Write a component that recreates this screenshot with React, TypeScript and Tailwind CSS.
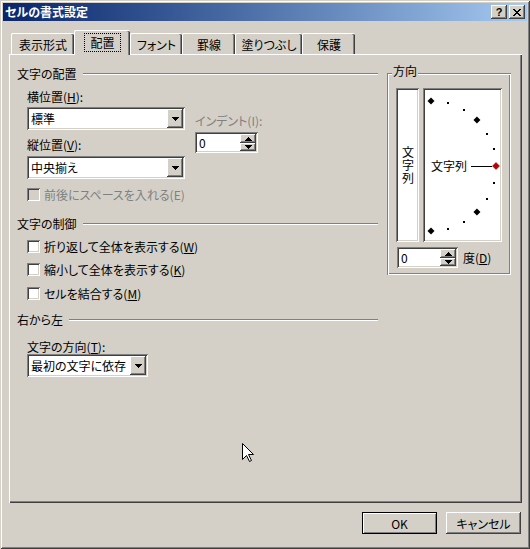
import React from 'react';

// classic 3D edges, drawn with inset shadows so they take no layout room
const raised =
  'shadow-[inset_-1px_-1px_#404040,inset_1px_1px_#ffffff,inset_-2px_-2px_#808080,inset_2px_2px_#d4d0c8]';
const sunken =
  'shadow-[inset_1px_1px_#808080,inset_-1px_-1px_#ffffff,inset_2px_2px_#404040,inset_-2px_-2px_#d4d0c8]';
const etched =
  'shadow-[inset_1px_1px_#808080,inset_-1px_-1px_#ffffff,inset_2px_2px_#ffffff,inset_-2px_-2px_#808080]';

// ─── Small pieces ─────────────────────────────────────────────────────────────

function DownArrow() {
  return (
    <svg width="7" height="4" viewBox="0 0 7 4" shapeRendering="crispEdges">
      <rect x="0" y="0" width="7" height="1" fill="#000" />
      <rect x="1" y="1" width="5" height="1" fill="#000" />
      <rect x="2" y="2" width="3" height="1" fill="#000" />
      <rect x="3" y="3" width="1" height="1" fill="#000" />
    </svg>
  );
}

function UpArrow() {
  return (
    <svg width="7" height="4" viewBox="0 0 7 4" shapeRendering="crispEdges">
      <rect x="3" y="0" width="1" height="1" fill="#000" />
      <rect x="2" y="1" width="3" height="1" fill="#000" />
      <rect x="1" y="2" width="5" height="1" fill="#000" />
      <rect x="0" y="3" width="7" height="1" fill="#000" />
    </svg>
  );
}

function Combo({ value, className }: { value: string; className: string }) {
  return (
    <div className={`${className} h-[23px] bg-white ${sunken} flex items-center pl-[4px] pr-[2px]`}>
      <span className="flex-1 leading-[13px] whitespace-nowrap">{value}</span>
      <div className={`w-[16px] h-[19px] bg-[#d4d0c8] ${raised} flex items-center justify-center`}>
        <DownArrow />
      </div>
    </div>
  );
}

function Spin({ className }: { className: string }) {
  return (
    <div className={`${className} h-[21px] bg-white ${sunken} flex p-[2px]`}>
      <span className="flex-1 pl-[2px] leading-[17px]">0</span>
      <div className="w-[16px] flex flex-col">
        <div className={`h-[9px] bg-[#d4d0c8] ${raised} flex items-center justify-center`}>
          <UpArrow />
        </div>
        <div className={`h-[8px] bg-[#d4d0c8] ${raised} flex items-center justify-center`}>
          <DownArrow />
        </div>
      </div>
    </div>
  );
}

function Check({ label, disabled }: { label: React.ReactNode; disabled?: boolean }) {
  return (
    <div className="flex items-center h-[13px] pl-[10px]">
      <div className={`w-[13px] h-[13px] ${sunken} ${disabled ? 'bg-[#d4d0c8]' : 'bg-white'}`} />
      <span className={`ml-[4px] leading-[13px] ${disabled ? 'text-[#808080]' : ''}`}>{label}</span>
    </div>
  );
}

function Header({ title }: { title: string }) {
  return (
    <div className="flex items-center h-[13px]">
      <span className="leading-[13px]">{title}</span>
      <div className="flex-1 ml-[6px] h-[2px] border-t border-t-[#808080] border-b border-b-white" />
    </div>
  );
}

const Key = ({ k }: { k: string }) => <span className="underline underline-offset-[1px]">{k}</span>;

// ─── Orientation dial ─────────────────────────────────────────────────────────

function Dial() {
  const cx = 8;
  const cy = 78;
  const r = 65;
  const marks = [];
  for (let a = -90; a <= 90; a += 15) {
    const rad = (a * Math.PI) / 180;
    const x = cx + r * Math.cos(rad);
    const y = cy - r * Math.sin(rad);
    if (a % 45 === 0) {
      marks.push(
        <polygon
          key={a}
          points={`${x},${y - 3.5} ${x + 3.5},${y} ${x},${y + 3.5} ${x - 3.5},${y}`}
          fill={a === 0 ? '#c00000' : '#000'}
          stroke={a === 0 ? '#600000' : 'none'}
          strokeWidth="0.5"
        />,
      );
    } else {
      marks.push(<rect key={a} x={Math.round(x) - 1} y={Math.round(y) - 1} width="2" height="2" fill="#000" />);
    }
  }
  return (
    <div className={`relative w-[79px] h-[154px] bg-white ${sunken}`}>
      <svg className="absolute inset-0" width="79" height="154" viewBox="0 0 79 154">
        <line x1="48" y1="78.5" x2="69" y2="78.5" stroke="#000" strokeWidth="1" shapeRendering="crispEdges" />
        {marks}
      </svg>
      <span className="absolute left-[8px] top-[71px] leading-[13px]">文字列</span>
    </div>
  );
}

// ─── App ──────────────────────────────────────────────────────────────────────

const TABS = [
  { label: '表示形式', w: 'w-[63px]' },
  { label: '配置', w: 'w-[56px]', active: true },
  { label: 'フォント', w: 'w-[52px]' },
  { label: '罫線', w: 'w-[53px]' },
  { label: '塗りつぶし', w: 'w-[67px]' },
  { label: '保護', w: 'w-[53px]' },
];

export default function App() {
  return (
    <div className="relative w-[530px] h-[549px] bg-[#d4d0c8] flex flex-col text-[12px] text-black font-['Noto_Sans_CJK_JP',sans-serif] [font-feature-settings:'palt'] shadow-[inset_1px_1px_#d4d0c8,inset_-1px_-1px_#404040,inset_2px_2px_#ffffff,inset_-2px_-2px_#808080] overflow-hidden">
      {/* Title bar */}
      <div className="mx-[3px] mt-[3px] h-[18px] bg-gradient-to-r from-[#0a246a] to-[#a6caf0] flex items-center pl-[2px] pr-[2px]">
        <span className="flex-1 text-white font-bold leading-[14px]">セルの書式設定</span>
        <div className={`w-[16px] h-[14px] bg-[#d4d0c8] ${raised} flex items-center justify-center`}>
          <span className="font-bold text-[11px] leading-[11px] font-['Liberation_Sans',sans-serif]">?</span>
        </div>
        <div className={`ml-[2px] w-[16px] h-[14px] bg-[#d4d0c8] ${raised} flex items-center justify-center`}>
          <svg width="8" height="7" viewBox="0 0 8 7" shapeRendering="crispEdges">
            <path d="M0 0h2v1h-2zM6 0h2v1h-2zM1 1h2v1h-2zM5 1h2v1h-2zM2 2h4v1h-4zM3 3h2v1h-2zM2 4h4v1h-4zM1 5h2v1h-2zM5 5h2v1h-2zM0 6h2v1h-2zM6 6h2v1h-2z" fill="#000" />
          </svg>
        </div>
      </div>

      {/* Tabs */}
      <div className="mt-[9px] ml-[11px] h-[24px] flex items-end">
        {TABS.map((t) =>
          t.active ? (
            <div
              key={t.label}
              className={`${t.w} relative z-10 h-[25px] -mb-[1px] bg-[#d4d0c8] rounded-t-[2px] border-l border-t border-white shadow-[inset_-1px_0_#404040,inset_-2px_0_#808080] flex justify-center pt-[2px]`}
            >
              <span className="h-[19px] px-[5px] border border-dotted border-black leading-[17px]">{t.label}</span>
            </div>
          ) : (
            <div
              key={t.label}
              className={`${t.w} h-[21px] bg-[#d4d0c8] rounded-t-[2px] border-l border-t border-white shadow-[inset_-1px_0_#404040,inset_-2px_0_#808080] flex justify-center pt-[4px]`}
            >
              <span className="leading-[13px] whitespace-nowrap">{t.label}</span>
            </div>
          ),
        )}
      </div>

      {/* Panel */}
      <div className="ml-[9px] w-[513px] h-[449px] bg-[#d4d0c8] shadow-[inset_1px_1px_#ffffff,inset_-1px_-1px_#404040,inset_-2px_-2px_#808080] flex">
        {/* Left column */}
        <div className="ml-[8px] w-[361px] pt-[13px] flex flex-col">
          <Header title="文字の配置" />
          <div className="mt-[10px] pl-[10px] flex">
            <div className="w-[158px] flex flex-col">
              <span className="h-[13px] leading-[13px]">
                横位置(<Key k="H" />):
              </span>
              <Combo value="標準" className="mt-[4px] w-[158px]" />
              <span className="mt-[8px] h-[13px] leading-[13px]">
                縦位置(<Key k="V" />):
              </span>
              <Combo value="中央揃え" className="mt-[5px] w-[158px]" />
            </div>
            <div className="ml-[10px] flex flex-col">
              <span className="mt-[24px] h-[13px] leading-[13px] text-[#808080]">インデント(I):</span>
              <Spin className="mt-[5px] w-[63px]" />
            </div>
          </div>
          <div className="mt-[9px]">
            <Check label="前後にスペースを入れる(E)" disabled />
          </div>

          <div className="mt-[16px]">
            <Header title="文字の制御" />
          </div>
          <div className="mt-[10px]">
            <Check label={<>折り返して全体を表示する(<Key k="W" />)</>} />
          </div>
          <div className="mt-[10px]">
            <Check label={<>縮小して全体を表示する(<Key k="K" />)</>} />
          </div>
          <div className="mt-[11px]">
            <Check label={<>セルを結合する(<Key k="M" />)</>} />
          </div>

          <div className="mt-[13px]">
            <Header title="右から左" />
          </div>
          <div className="pl-[10px] flex flex-col">
            <span className="mt-[14px] h-[13px] leading-[13px]">
              文字の方向(<Key k="T" />):
            </span>
            <Combo value="最初の文字に依存" className="mt-[1px] w-[121px]" />
          </div>
        </div>

        {/* Orientation group */}
        <div className={`relative ml-[9px] mt-[19px] w-[124px] h-[202px] ${etched} pt-[15px] pl-[9px]`}>
          <span className="absolute left-[5px] -top-[9px] px-[1px] bg-[#d4d0c8] leading-[13px]">方向</span>
          <div className="flex">
            <div className={`w-[23px] h-[154px] bg-white ${sunken} flex items-center justify-center`}>
              <span className="[writing-mode:vertical-rl] [text-orientation:upright] tracking-[1px] leading-[14px]">
                文字列
              </span>
            </div>
            <div className="ml-[4px]">
              <Dial />
            </div>
          </div>
          <div className="mt-[5px] pl-[1px] flex items-center">
            <Spin className="w-[61px]" />
            <span className="ml-[5px] leading-[13px]">
              度(<Key k="D" />)
            </span>
          </div>
        </div>
      </div>

      {/* Buttons */}
      <div className="mt-[9px] pr-[9px] flex justify-end gap-[9px]">
        <button className="w-[75px] h-[22px] bg-[#d4d0c8] shadow-[inset_0_0_0_1px_#000000,inset_2px_2px_#ffffff,inset_-2px_-2px_#808080] leading-[13px]">
          OK
        </button>
        <button className={`w-[75px] h-[22px] bg-[#d4d0c8] ${raised} leading-[13px]`}>キャンセル</button>
      </div>

      {/* Mouse pointer */}
      <svg className="absolute left-[242px] top-[443px]" width="13" height="20" viewBox="0 0 13 20">
        <path d="M0.5 0.5 L0.5 16.5 L4.5 12.5 L7.5 18.5 L9.5 17.5 L6.5 11.5 L11.5 11.5 Z" fill="#fff" stroke="#000" strokeWidth="1" />
      </svg>
    </div>
  );
}
